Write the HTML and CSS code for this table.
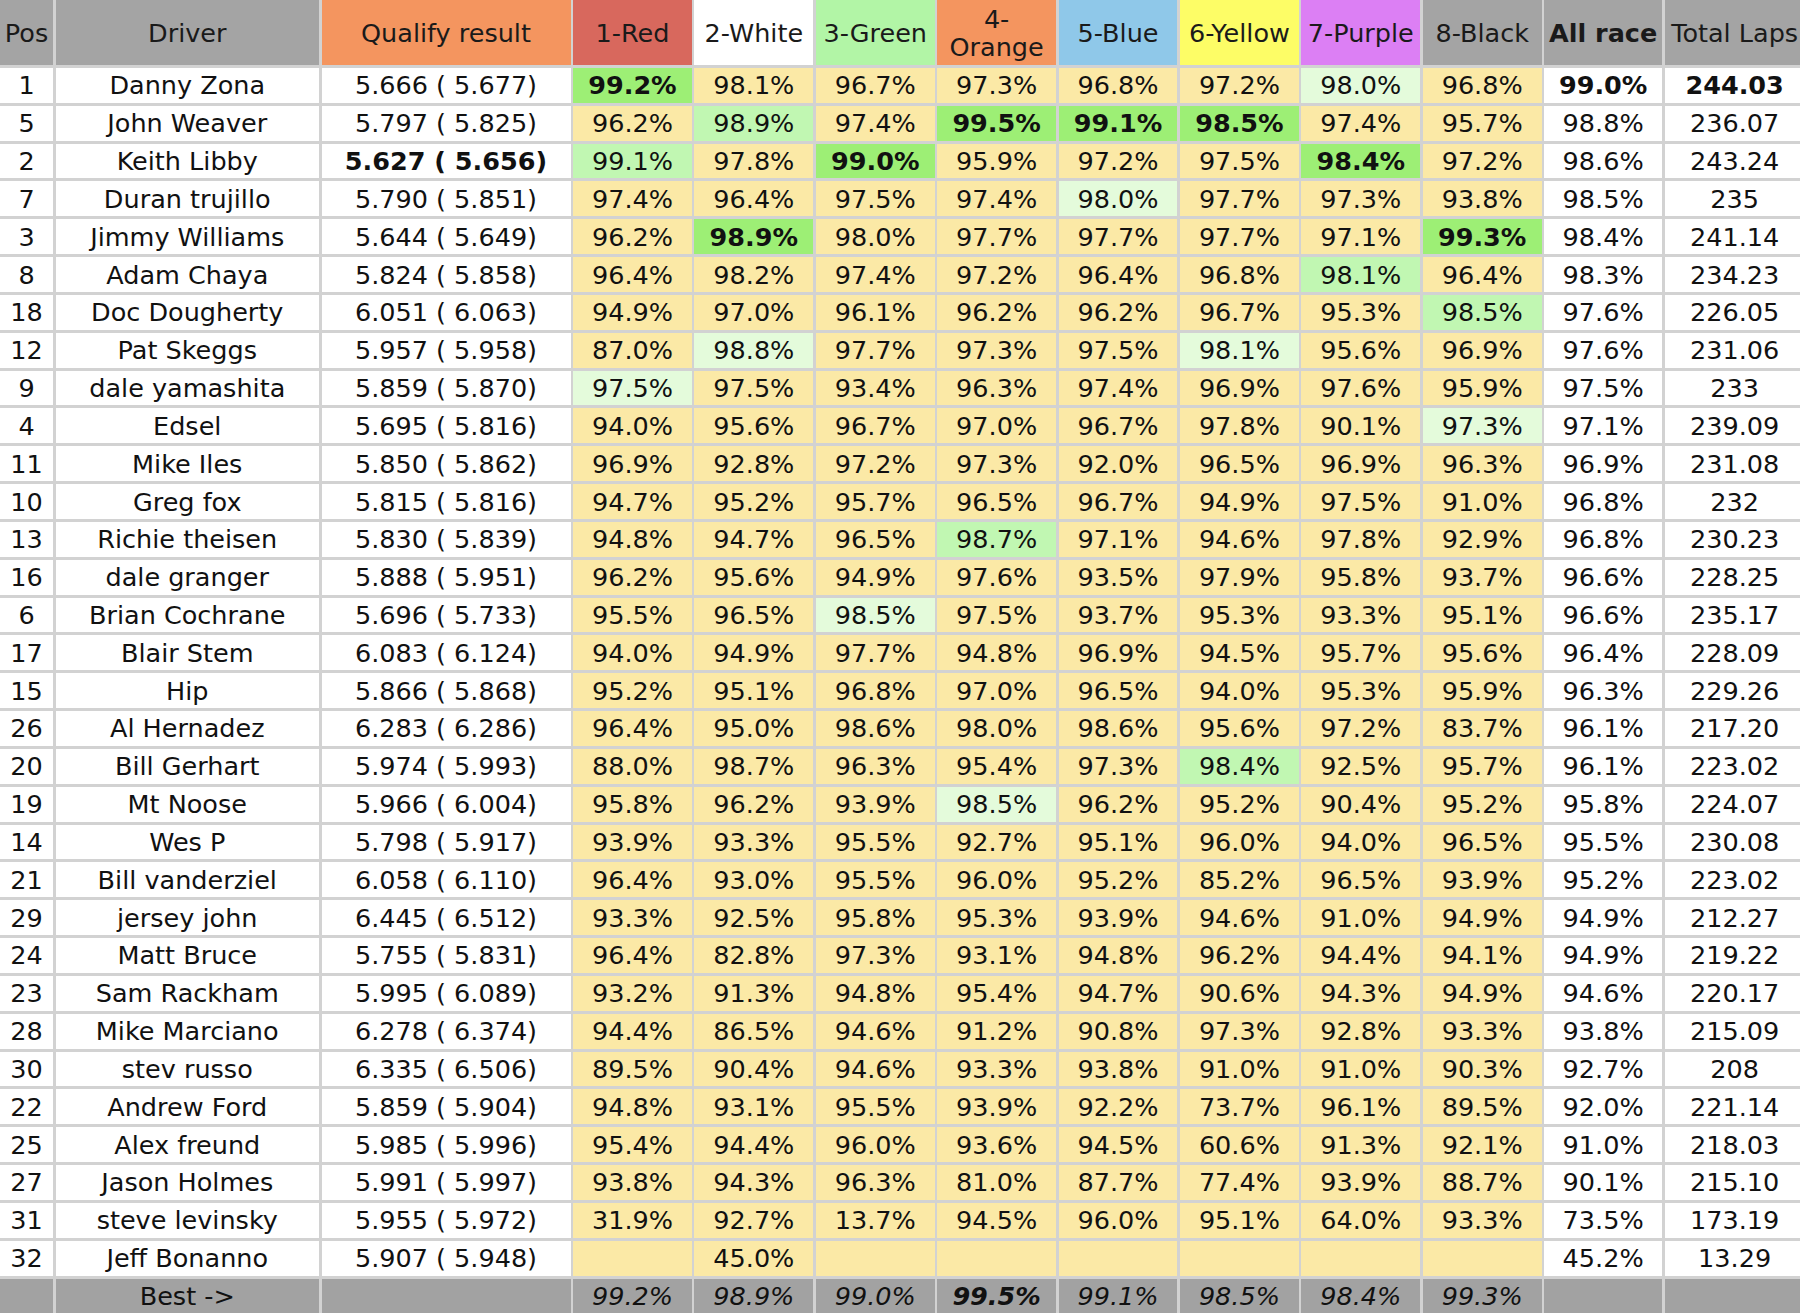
FILE: index.html
```html
<!DOCTYPE html>
<html lang="en">
<head>
<meta charset="utf-8">
<title>Race results</title>
<link rel="stylesheet" href="styles.css">
</head>
<body>
<table class="sheet">
<thead>
<tr>
<th class="h-gray">Pos</th><th class="h-gray">Driver</th><th class="h-orange">Qualify result</th><th class="h-red">1-Red</th><th class="h-white">2-White</th><th class="h-green">3-Green</th><th class="h-orange">4-Orange</th><th class="h-blue">5-Blue</th><th class="h-yellow">6-Yellow</th><th class="h-purple">7-Purple</th><th class="h-gray">8-Black</th><th class="h-gray b">All race</th><th class="h-gray">Total Laps</th>
</tr>
</thead>
<tbody>
<tr><td>1</td><td>Danny Zona</td><td>5.666 ( 5.677)</td><td class="g1">99.2%</td><td class="y">98.1%</td><td class="y">96.7%</td><td class="y">97.3%</td><td class="y">96.8%</td><td class="y">97.2%</td><td class="g3">98.0%</td><td class="y">96.8%</td><td class="b">99.0%</td><td class="b">244.03</td></tr>
<tr><td>5</td><td>John Weaver</td><td>5.797 ( 5.825)</td><td class="y">96.2%</td><td class="g2">98.9%</td><td class="y">97.4%</td><td class="g1">99.5%</td><td class="g1">99.1%</td><td class="g1">98.5%</td><td class="y">97.4%</td><td class="y">95.7%</td><td>98.8%</td><td>236.07</td></tr>
<tr><td>2</td><td>Keith Libby</td><td class="b">5.627 ( 5.656)</td><td class="g2">99.1%</td><td class="y">97.8%</td><td class="g1">99.0%</td><td class="y">95.9%</td><td class="y">97.2%</td><td class="y">97.5%</td><td class="g1">98.4%</td><td class="y">97.2%</td><td>98.6%</td><td>243.24</td></tr>
<tr><td>7</td><td>Duran trujillo</td><td>5.790 ( 5.851)</td><td class="y">97.4%</td><td class="y">96.4%</td><td class="y">97.5%</td><td class="y">97.4%</td><td class="g3">98.0%</td><td class="y">97.7%</td><td class="y">97.3%</td><td class="y">93.8%</td><td>98.5%</td><td>235</td></tr>
<tr><td>3</td><td>Jimmy Williams</td><td>5.644 ( 5.649)</td><td class="y">96.2%</td><td class="g1">98.9%</td><td class="y">98.0%</td><td class="y">97.7%</td><td class="y">97.7%</td><td class="y">97.7%</td><td class="y">97.1%</td><td class="g1">99.3%</td><td>98.4%</td><td>241.14</td></tr>
<tr><td>8</td><td>Adam Chaya</td><td>5.824 ( 5.858)</td><td class="y">96.4%</td><td class="y">98.2%</td><td class="y">97.4%</td><td class="y">97.2%</td><td class="y">96.4%</td><td class="y">96.8%</td><td class="g2">98.1%</td><td class="y">96.4%</td><td>98.3%</td><td>234.23</td></tr>
<tr><td>18</td><td>Doc Dougherty</td><td>6.051 ( 6.063)</td><td class="y">94.9%</td><td class="y">97.0%</td><td class="y">96.1%</td><td class="y">96.2%</td><td class="y">96.2%</td><td class="y">96.7%</td><td class="y">95.3%</td><td class="g2">98.5%</td><td>97.6%</td><td>226.05</td></tr>
<tr><td>12</td><td>Pat Skeggs</td><td>5.957 ( 5.958)</td><td class="y">87.0%</td><td class="g3">98.8%</td><td class="y">97.7%</td><td class="y">97.3%</td><td class="y">97.5%</td><td class="g3">98.1%</td><td class="y">95.6%</td><td class="y">96.9%</td><td>97.6%</td><td>231.06</td></tr>
<tr><td>9</td><td>dale yamashita</td><td>5.859 ( 5.870)</td><td class="g3">97.5%</td><td class="y">97.5%</td><td class="y">93.4%</td><td class="y">96.3%</td><td class="y">97.4%</td><td class="y">96.9%</td><td class="y">97.6%</td><td class="y">95.9%</td><td>97.5%</td><td>233</td></tr>
<tr><td>4</td><td>Edsel</td><td>5.695 ( 5.816)</td><td class="y">94.0%</td><td class="y">95.6%</td><td class="y">96.7%</td><td class="y">97.0%</td><td class="y">96.7%</td><td class="y">97.8%</td><td class="y">90.1%</td><td class="g3">97.3%</td><td>97.1%</td><td>239.09</td></tr>
<tr><td>11</td><td>Mike Iles</td><td>5.850 ( 5.862)</td><td class="y">96.9%</td><td class="y">92.8%</td><td class="y">97.2%</td><td class="y">97.3%</td><td class="y">92.0%</td><td class="y">96.5%</td><td class="y">96.9%</td><td class="y">96.3%</td><td>96.9%</td><td>231.08</td></tr>
<tr><td>10</td><td>Greg fox</td><td>5.815 ( 5.816)</td><td class="y">94.7%</td><td class="y">95.2%</td><td class="y">95.7%</td><td class="y">96.5%</td><td class="y">96.7%</td><td class="y">94.9%</td><td class="y">97.5%</td><td class="y">91.0%</td><td>96.8%</td><td>232</td></tr>
<tr><td>13</td><td>Richie theisen</td><td>5.830 ( 5.839)</td><td class="y">94.8%</td><td class="y">94.7%</td><td class="y">96.5%</td><td class="g2">98.7%</td><td class="y">97.1%</td><td class="y">94.6%</td><td class="y">97.8%</td><td class="y">92.9%</td><td>96.8%</td><td>230.23</td></tr>
<tr><td>16</td><td>dale granger</td><td>5.888 ( 5.951)</td><td class="y">96.2%</td><td class="y">95.6%</td><td class="y">94.9%</td><td class="y">97.6%</td><td class="y">93.5%</td><td class="y">97.9%</td><td class="y">95.8%</td><td class="y">93.7%</td><td>96.6%</td><td>228.25</td></tr>
<tr><td>6</td><td>Brian Cochrane</td><td>5.696 ( 5.733)</td><td class="y">95.5%</td><td class="y">96.5%</td><td class="g3">98.5%</td><td class="y">97.5%</td><td class="y">93.7%</td><td class="y">95.3%</td><td class="y">93.3%</td><td class="y">95.1%</td><td>96.6%</td><td>235.17</td></tr>
<tr><td>17</td><td>Blair Stem</td><td>6.083 ( 6.124)</td><td class="y">94.0%</td><td class="y">94.9%</td><td class="y">97.7%</td><td class="y">94.8%</td><td class="y">96.9%</td><td class="y">94.5%</td><td class="y">95.7%</td><td class="y">95.6%</td><td>96.4%</td><td>228.09</td></tr>
<tr><td>15</td><td>Hip</td><td>5.866 ( 5.868)</td><td class="y">95.2%</td><td class="y">95.1%</td><td class="y">96.8%</td><td class="y">97.0%</td><td class="y">96.5%</td><td class="y">94.0%</td><td class="y">95.3%</td><td class="y">95.9%</td><td>96.3%</td><td>229.26</td></tr>
<tr><td>26</td><td>Al Hernadez</td><td>6.283 ( 6.286)</td><td class="y">96.4%</td><td class="y">95.0%</td><td class="y">98.6%</td><td class="y">98.0%</td><td class="y">98.6%</td><td class="y">95.6%</td><td class="y">97.2%</td><td class="y">83.7%</td><td>96.1%</td><td>217.20</td></tr>
<tr><td>20</td><td>Bill Gerhart</td><td>5.974 ( 5.993)</td><td class="y">88.0%</td><td class="y">98.7%</td><td class="y">96.3%</td><td class="y">95.4%</td><td class="y">97.3%</td><td class="g2">98.4%</td><td class="y">92.5%</td><td class="y">95.7%</td><td>96.1%</td><td>223.02</td></tr>
<tr><td>19</td><td>Mt Noose</td><td>5.966 ( 6.004)</td><td class="y">95.8%</td><td class="y">96.2%</td><td class="y">93.9%</td><td class="g3">98.5%</td><td class="y">96.2%</td><td class="y">95.2%</td><td class="y">90.4%</td><td class="y">95.2%</td><td>95.8%</td><td>224.07</td></tr>
<tr><td>14</td><td>Wes P</td><td>5.798 ( 5.917)</td><td class="y">93.9%</td><td class="y">93.3%</td><td class="y">95.5%</td><td class="y">92.7%</td><td class="y">95.1%</td><td class="y">96.0%</td><td class="y">94.0%</td><td class="y">96.5%</td><td>95.5%</td><td>230.08</td></tr>
<tr><td>21</td><td>Bill vanderziel</td><td>6.058 ( 6.110)</td><td class="y">96.4%</td><td class="y">93.0%</td><td class="y">95.5%</td><td class="y">96.0%</td><td class="y">95.2%</td><td class="y">85.2%</td><td class="y">96.5%</td><td class="y">93.9%</td><td>95.2%</td><td>223.02</td></tr>
<tr><td>29</td><td>jersey john</td><td>6.445 ( 6.512)</td><td class="y">93.3%</td><td class="y">92.5%</td><td class="y">95.8%</td><td class="y">95.3%</td><td class="y">93.9%</td><td class="y">94.6%</td><td class="y">91.0%</td><td class="y">94.9%</td><td>94.9%</td><td>212.27</td></tr>
<tr><td>24</td><td>Matt Bruce</td><td>5.755 ( 5.831)</td><td class="y">96.4%</td><td class="y">82.8%</td><td class="y">97.3%</td><td class="y">93.1%</td><td class="y">94.8%</td><td class="y">96.2%</td><td class="y">94.4%</td><td class="y">94.1%</td><td>94.9%</td><td>219.22</td></tr>
<tr><td>23</td><td>Sam Rackham</td><td>5.995 ( 6.089)</td><td class="y">93.2%</td><td class="y">91.3%</td><td class="y">94.8%</td><td class="y">95.4%</td><td class="y">94.7%</td><td class="y">90.6%</td><td class="y">94.3%</td><td class="y">94.9%</td><td>94.6%</td><td>220.17</td></tr>
<tr><td>28</td><td>Mike Marciano</td><td>6.278 ( 6.374)</td><td class="y">94.4%</td><td class="y">86.5%</td><td class="y">94.6%</td><td class="y">91.2%</td><td class="y">90.8%</td><td class="y">97.3%</td><td class="y">92.8%</td><td class="y">93.3%</td><td>93.8%</td><td>215.09</td></tr>
<tr><td>30</td><td>stev russo</td><td>6.335 ( 6.506)</td><td class="y">89.5%</td><td class="y">90.4%</td><td class="y">94.6%</td><td class="y">93.3%</td><td class="y">93.8%</td><td class="y">91.0%</td><td class="y">91.0%</td><td class="y">90.3%</td><td>92.7%</td><td>208</td></tr>
<tr><td>22</td><td>Andrew Ford</td><td>5.859 ( 5.904)</td><td class="y">94.8%</td><td class="y">93.1%</td><td class="y">95.5%</td><td class="y">93.9%</td><td class="y">92.2%</td><td class="y">73.7%</td><td class="y">96.1%</td><td class="y">89.5%</td><td>92.0%</td><td>221.14</td></tr>
<tr><td>25</td><td>Alex freund</td><td>5.985 ( 5.996)</td><td class="y">95.4%</td><td class="y">94.4%</td><td class="y">96.0%</td><td class="y">93.6%</td><td class="y">94.5%</td><td class="y">60.6%</td><td class="y">91.3%</td><td class="y">92.1%</td><td>91.0%</td><td>218.03</td></tr>
<tr><td>27</td><td>Jason Holmes</td><td>5.991 ( 5.997)</td><td class="y">93.8%</td><td class="y">94.3%</td><td class="y">96.3%</td><td class="y">81.0%</td><td class="y">87.7%</td><td class="y">77.4%</td><td class="y">93.9%</td><td class="y">88.7%</td><td>90.1%</td><td>215.10</td></tr>
<tr><td>31</td><td>steve levinsky</td><td>5.955 ( 5.972)</td><td class="y">31.9%</td><td class="y">92.7%</td><td class="y">13.7%</td><td class="y">94.5%</td><td class="y">96.0%</td><td class="y">95.1%</td><td class="y">64.0%</td><td class="y">93.3%</td><td>73.5%</td><td>173.19</td></tr>
<tr><td>32</td><td>Jeff Bonanno</td><td>5.907 ( 5.948)</td><td class="y"></td><td class="y">45.0%</td><td class="y"></td><td class="y"></td><td class="y"></td><td class="y"></td><td class="y"></td><td class="y"></td><td>45.2%</td><td>13.29</td></tr>
<tr class="best"><td></td><td class="label">Best -&gt;</td><td></td><td>99.2%</td><td>98.9%</td><td>99.0%</td><td class="b">99.5%</td><td>99.1%</td><td>98.5%</td><td>98.4%</td><td>99.3%</td><td></td><td></td></tr>
</tbody>
</table>
</body>
</html>
```
FILE: styles.css
```css
html, body {
  margin: 0;
  padding: 0;
  overflow: hidden;
  background: #ffffff;
}

.sheet {
  display: grid;
  grid-template-columns: 53px 263.5px 249px repeat(8, 118.9px) 118px 140px;
  grid-template-rows: 65px repeat(33, 34.84px);
  column-gap: 2.5px;
  row-gap: 3px;
  background: #d2d2d2;
  border-spacing: 0;
  font-family: "DejaVu Sans", Verdana, sans-serif;
  font-size: 25.5px;
  color: #111111;
  width: max-content;
}

.sheet thead,
.sheet tbody,
.sheet tr {
  display: contents;
}

.sheet th,
.sheet td {
  display: flex;
  align-items: center;
  justify-content: center;
  text-align: center;
  padding: 0;
  margin: 0;
  background: #ffffff;
  white-space: nowrap;
  overflow: hidden;
}

.sheet th {
  font-weight: normal;
  line-height: 28px;
  white-space: normal;
  color: #1a1a1a;
}

.h-gray { background: #a4a4a4 !important; }
.h-orange { background: #f4955f !important; }
.h-red { background: #d8685d !important; }
.h-white { background: #ffffff !important; }
.h-green { background: #b2f5a6 !important; }
.h-blue { background: #8fc8e9 !important; }
.h-yellow { background: #fdfd66 !important; }
.h-purple { background: #dc7ff4 !important; }

.sheet td.y { background: #fbe9a6; }
.sheet td.g3 { background: #e4fbdb; }
.sheet td.g2 { background: #c1f7b2; }
.sheet td.g1 { background: #9def75; font-weight: bold; }

.b { font-weight: bold; }
.sheet th.b { font-weight: bold; }

.sheet tr.best td {
  background: #a2a2a2;
  font-style: italic;
}

.sheet tr.best td.label {
  font-style: normal;
}
```
